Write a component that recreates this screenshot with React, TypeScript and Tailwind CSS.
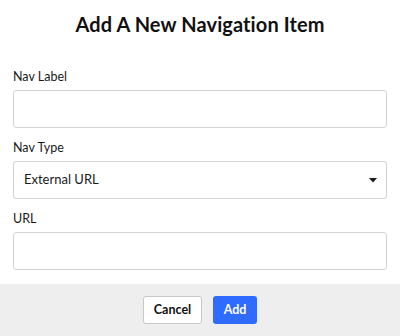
import React from "react";

export default function App() {
  const font = { fontFamily: "Lato, 'Noto Sans', sans-serif" };
  return (
    <div className="w-[400px] h-[336px] bg-white flex flex-col text-[#1a1a1a]" style={font}>
      <div className="flex-1 px-[13px]">
        <h1 className="text-center text-[20px] font-bold tracking-[0.1px] mt-[11px] leading-[26px] text-[#111]">
          Add A New Navigation Item
        </h1>
        <div className="mt-[32px] text-[12.5px] leading-[16px]">Nav Label</div>
        <div className="mt-[5px] h-[38px] rounded-[3px] border border-[#d4d4d4]" />
        <div className="mt-[12px] text-[12.5px] leading-[16px]">Nav Type</div>
        <div className="mt-[5px] h-[38px] rounded-[3px] border border-[#d4d4d4] flex items-center justify-between pl-[10px] pr-[9px]">
          <span className="text-[13px]">External URL</span>
          <svg width="8" height="5" viewBox="0 0 8 5">
            <polygon points="0,0 8,0 4,4.5" fill="#1a1a1a" />
          </svg>
        </div>
        <div className="mt-[12px] text-[12.5px] leading-[16px]">URL</div>
        <div className="mt-[5px] h-[38px] rounded-[3px] border border-[#d4d4d4]" />
      </div>
      <div className="h-[52px] bg-[#eeeeee] flex items-center justify-center gap-[11px]">
        <button className="h-[28px] w-[59px] rounded-[3px] border border-[#c8c8c8] bg-white text-[12.5px] font-bold text-[#111]">
          Cancel
        </button>
        <button className="h-[28px] w-[44px] rounded-[3px] bg-[#2f6bff] text-[12.5px] font-bold text-white">
          Add
        </button>
      </div>
    </div>
  );
}
